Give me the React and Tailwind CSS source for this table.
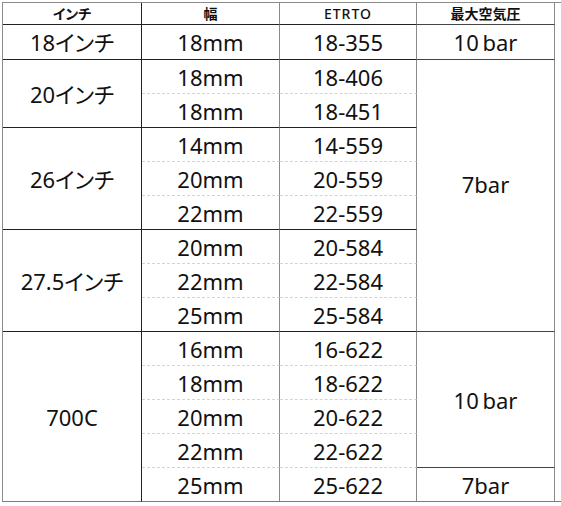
const groups = [
  { size: '18インチ', rows: [['18mm', '18-355']] },
  { size: '20インチ', rows: [['18mm', '18-406'], ['18mm', '18-451']] },
  { size: '26インチ', rows: [['14mm', '14-559'], ['20mm', '20-559'], ['22mm', '22-559']] },
  { size: '27.5インチ', rows: [['20mm', '20-584'], ['22mm', '22-584'], ['25mm', '25-584']] },
  { size: '700C', rows: [['16mm', '16-622'], ['18mm', '18-622'], ['20mm', '20-622'], ['22mm', '22-622'], ['25mm', '25-622']] },
]

const TOTAL = 14

// pressure cells keyed by row index: [rowSpan, text, isBottom, extra]
const pressure = {
  0: [1, '10\u2009bar', false, ''],
  1: [8, '7bar', false, 'pb-[24px]'],
  9: [4, '10\u2009bar', false, ''],
  13: [1, '7bar', true, ''],
}

function App() {
  const rows = []
  let idx = 0
  groups.forEach((g) => {
    g.rows.forEach((r, i) => {
      const last = i === g.rows.length - 1
      const veryLast = idx === TOTAL - 1
      const sub = veryLast
        ? 'border-b-[#7a7a7a]'
        : last
          ? 'border-b-[#222]'
          : '[border-bottom-style:dashed] border-b-[#d4d4d4]'
      const p = pressure[idx]
      rows.push(
        <tr key={idx}>
          {i === 0 && (
            <td
              rowSpan={g.rows.length}
              className={`border-r border-b border-r-[#222] ${idx + g.rows.length === TOTAL ? 'border-b-[#7a7a7a]' : 'border-b-[#222]'} text-center align-middle`}
            >
              {g.size}
            </td>
          )}
          <td className={`${idx === 0 ? 'h-[35px]' : 'h-[34px]'} border-r border-b border-r-[#8a8a8a] ${sub} text-center align-middle`}>
            {r[0]}
          </td>
          <td className={`border-r border-b border-r-[#8a8a8a] ${sub} text-center align-middle`}>
            {r[1]}
          </td>
          {p && (
            <td
              rowSpan={p[0]}
              className={`border-r border-b border-r-[#8a8a8a] ${p[2] ? 'border-b-[#7a7a7a]' : 'border-b-[#444]'} ${p[3]} text-center align-middle`}
            >
              {p[1]}
            </td>
          )}
          {idx === 0 && <td rowSpan={TOTAL} className="border-b border-b-[#7a7a7a]"></td>}
        </tr>
      )
      idx++
    })
  })

  return (
    <div className="w-[561px] h-[506px] overflow-hidden bg-white">
      <table
        className="ml-[2px] mt-[2px] table-fixed border-separate border-spacing-0 border-t border-l border-[#8a8a8a] text-[22px] leading-none text-[#111] [font-feature-settings:'palt'] w-[600px]"
        style={{ fontFamily: '"Noto Sans", "Noto Sans CJK JP", sans-serif' }}
      >
        <colgroup>
          <col className="w-[139px]" />
          <col className="w-[138px]" />
          <col className="w-[137px]" />
          <col className="w-[138px]" />
          <col />
        </colgroup>
        <thead>
          <tr className="text-[14px]">
            <th className="h-[22px] border-r border-b border-r-[#222] border-b-[#222] font-bold">インチ</th>
            <th className="border-r border-b border-r-[#8a8a8a] border-b-[#222] font-bold">幅</th>
            <th className="border-r border-b border-r-[#8a8a8a] border-b-[#222] font-medium tracking-[1px]">ETRTO</th>
            <th className="border-r border-b border-r-[#8a8a8a] border-b-[#444] font-bold">最大空気圧</th>
            <th></th>
          </tr>
        </thead>
        <tbody>{rows}</tbody>
      </table>
    </div>
  )
}

export default App
